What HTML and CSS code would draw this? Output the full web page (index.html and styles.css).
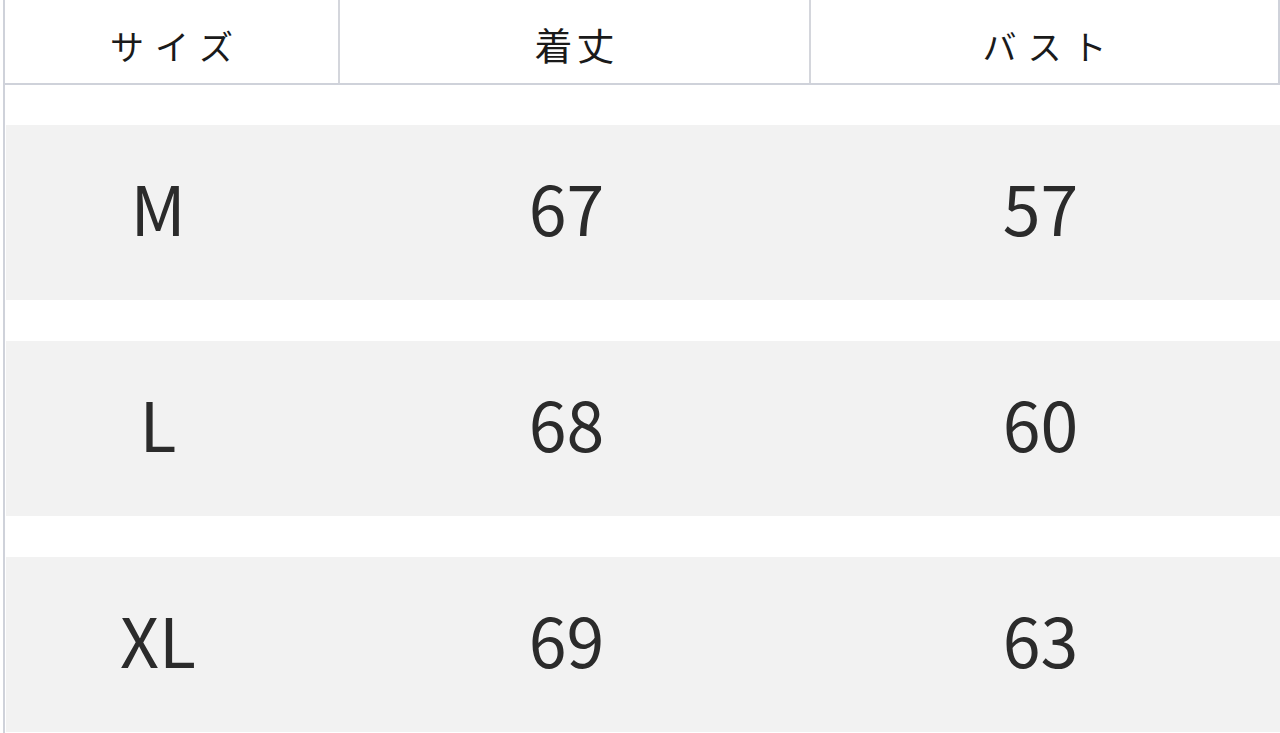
FILE: index.html
```html
<!DOCTYPE html>
<html lang="ja">
<head>
<meta charset="utf-8">
<title>サイズ表</title>
<link rel="stylesheet" href="styles.css">
</head>
<body>
<div class="sheet">
  <div class="head">
    <div class="hcell">サイズ</div>
    <div class="hcell hcell-tight">着丈</div>
    <div class="hcell">バスト</div>
  </div>
  <div class="rows">
    <div class="row">
      <div class="cell c1">M</div>
      <div class="cell c2">67</div>
      <div class="cell c3">57</div>
    </div>
    <div class="row">
      <div class="cell c1">L</div>
      <div class="cell c2">68</div>
      <div class="cell c3">60</div>
    </div>
    <div class="row">
      <div class="cell c1">XL</div>
      <div class="cell c2">69</div>
      <div class="cell c3">63</div>
    </div>
  </div>
</div>
</body>
</html>
```
FILE: styles.css
```css
html, body {
  margin: 0;
  padding: 0;
  background: #ffffff;
}
.sheet {
  margin-left: 3px;
  border-left: 2px solid #cfd2da;
  height: 733px;
  overflow: hidden;
  font-family: "Noto Sans CJK JP", "Noto Sans", sans-serif;
}
.head {
  display: grid;
  grid-template-columns: 335px 471px 1fr;
  height: 83px;
  border-bottom: 2px solid #cfd2da;
  border-right: 2px solid #cfd2da;
}
.hcell {
  display: flex;
  align-items: center;
  justify-content: center;
  padding-top: 8px;
  padding-left: 11px;
  font-size: 34px;
  font-weight: 400;
  letter-spacing: 11px;
  color: #1a1a1a;
  border-right: 2px solid #d4d6dc;
}
.hcell-tight {
  font-size: 38px;
  letter-spacing: 4px;
  padding-left: 4px;
  padding-top: 4px;
}
.hcell:last-child {
  border-right: none;
}
.rows {
  display: flex;
  flex-direction: column;
  gap: 41px;
  padding-top: 40px;
  padding-left: 1px;
}
.row {
  display: grid;
  grid-template-columns: 334px 471px 1fr;
  height: 175px;
  background: #f2f2f2;
}
.cell {
  display: flex;
  align-items: center;
  justify-content: center;
  font-size: 68px;
  font-weight: 400;
  color: #2b2b2b;
  padding-bottom: 12px;
}
.c1 { padding-right: 30px; }
.c2 { padding-right: 18px; }
.c3 { padding-right: 10px; }
```
